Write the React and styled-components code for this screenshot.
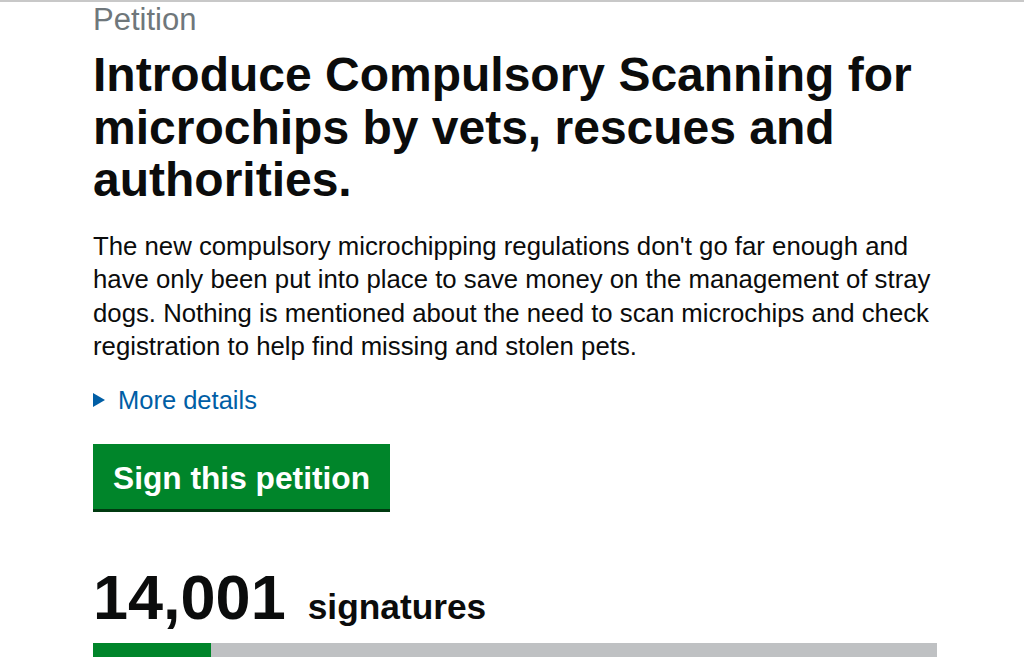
import styled, { createGlobalStyle } from "styled-components";

const GlobalStyle = createGlobalStyle`
  html, body {
    margin: 0;
    padding: 0;
    background: #ffffff;
  }
  body {
    font-family: "Liberation Sans", Arial, Helvetica, sans-serif;
    color: #0b0c0c;
  }
`;

const Page = styled.main`
  box-sizing: border-box;
  border-top: 2px solid #c8c8c8;
  padding: 0 87px 0 93px;
  min-height: 659px;
  overflow: hidden;
`;

const Content = styled.div`
  max-width: 844px;
`;

const Label = styled.div`
  font-size: 31px;
  line-height: 36px;
  color: #6f777b;
`;

const Heading = styled.h1`
  margin: 11px 0 0;
  font-size: 48px;
  line-height: 52.5px;
  font-weight: bold;
`;

const Summary = styled.p`
  margin: 23px 0 0;
  font-size: 25.75px;
  line-height: 33.6px;
`;

const Details = styled.div`
  margin-top: 19.5px;
  display: flex;
  align-items: center;
  gap: 13px;
  font-size: 25.5px;
  line-height: 34px;
  color: #005ea5;
`;

const Arrow = styled.span`
  width: 0;
  height: 0;
  border-top: 7px solid transparent;
  border-bottom: 7px solid transparent;
  border-left: 12px solid #005ea5;
`;

const Button = styled.button`
  margin-top: 27px;
  box-sizing: border-box;
  height: 68px;
  padding: 3px 20px 0;
  border: 0;
  border-bottom: 3px solid #003a10;
  background: #00852a;
  color: #ffffff;
  font-family: inherit;
  font-size: 31.7px;
  font-weight: bold;
  cursor: pointer;
`;

const Count = styled.div`
  margin-top: 55px;
  display: flex;
  align-items: baseline;
  gap: 22px;
  height: 60px;
  font-weight: bold;
`;

const Number = styled.span`
  font-size: 63px;
  line-height: 60px;
`;

const Unit = styled.span`
  font-size: 35.3px;
  line-height: 40px;
`;

const Bar = styled.div`
  margin-top: 16px;
  height: 14px;
  background: #bfc1c3;
`;

const Fill = styled.div`
  height: 100%;
  background: #00852a;
`;

const signatures = 14001;
const target = 100000;

export default function App() {
  return (
    <>
      <GlobalStyle />
      <Page>
        <Content>
          <Label>Petition</Label>
          <Heading>
            Introduce Compulsory Scanning for microchips by vets, rescues and
            authorities.
          </Heading>
          <Summary>
            The new compulsory microchipping regulations don't go far enough and
            have only been put into place to save money on the management of
            stray dogs. Nothing is mentioned about the need to scan microchips
            and check registration to help find missing and stolen pets.
          </Summary>
          <Details>
            <Arrow />
            More details
          </Details>
          <Button>Sign this petition</Button>
          <Count>
            <Number>{signatures.toLocaleString("en-GB")}</Number>
            <Unit>signatures</Unit>
          </Count>
          <Bar>
            <Fill style={{ width: `${(signatures / target) * 100}%` }} />
          </Bar>
        </Content>
      </Page>
    </>
  );
}
